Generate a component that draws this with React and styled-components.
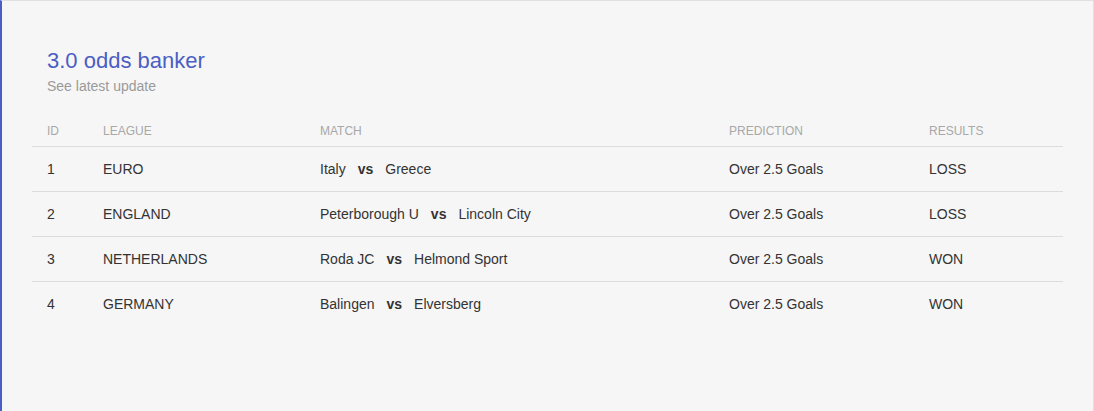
import React from "react"
import styled, { createGlobalStyle } from "styled-components"

const GlobalStyle = createGlobalStyle`
  html, body {
    margin: 0;
    padding: 0;
    background: #f6f6f6;
    font-family: "Liberation Sans", Arial, sans-serif;
  }
`

const Card = styled.div`
  box-sizing: border-box;
  height: 411px;
  background: #f6f6f6;
  border-left: 2px solid #4a5ec4;
  border-top: 1px solid #e0e0e0;
  border-right: 1px solid #e0e0e0;
  padding: 0 30px;
`

const Header = styled.div`
  padding: 46px 15px 0;
`

const Title = styled.h2`
  margin: 0;
  font-size: 22px;
  font-weight: 400;
  line-height: 28px;
  color: #4a5ec4;
`

const Subtitle = styled.p`
  margin: 1px 0 0;
  font-size: 14px;
  line-height: 20px;
  color: #9a9a9a;
`

const Table = styled.table`
  width: 100%;
  margin-top: 25px;
  border-collapse: collapse;
  table-layout: fixed;
`

const Th = styled.th`
  box-sizing: border-box;
  width: ${p => (p.w ? `${p.w}px` : "auto")};
  text-align: left;
  font-weight: 400;
  font-size: 12px;
  line-height: 14px;
  color: #a8a8a8;
  text-transform: uppercase;
  padding: 3px 15px 8px;
  border-bottom: 1px solid #dcdcdc;
`

const Row = styled.tr`
  & + & td {
    border-top: 1px solid #dcdcdc;
  }
`

const Td = styled.td`
  font-size: 14px;
  color: #333;
  padding: 0 15px;
  height: 44px;
`

const Vs = styled.b`
  padding: 0 12px;
  font-weight: 700;
`

const rows = [
  { id: 1, league: "EURO", home: "Italy", away: "Greece", result: "LOSS" },
  { id: 2, league: "ENGLAND", home: "Peterborough U", away: "Lincoln City", result: "LOSS" },
  { id: 3, league: "NETHERLANDS", home: "Roda JC", away: "Helmond Sport", result: "WON" },
  { id: 4, league: "GERMANY", home: "Balingen", away: "Elversberg", result: "WON" },
]

export default function App() {
  return (
    <>
      <GlobalStyle />
      <Card>
        <Header>
          <Title>3.0 odds banker</Title>
          <Subtitle>See latest update</Subtitle>
        </Header>
        <Table>
          <thead>
            <tr>
              <Th w={56}>ID</Th>
              <Th w={217}>League</Th>
              <Th w={409}>Match</Th>
              <Th w={200}>Prediction</Th>
              <Th>Results</Th>
            </tr>
          </thead>
          <tbody>
            {rows.map(r => (
              <Row key={r.id}>
                <Td>{r.id}</Td>
                <Td>{r.league}</Td>
                <Td>
                  {r.home}
                  <Vs>vs</Vs>
                  {r.away}
                </Td>
                <Td>Over 2.5 Goals</Td>
                <Td>{r.result}</Td>
              </Row>
            ))}
          </tbody>
        </Table>
      </Card>
    </>
  )
}
